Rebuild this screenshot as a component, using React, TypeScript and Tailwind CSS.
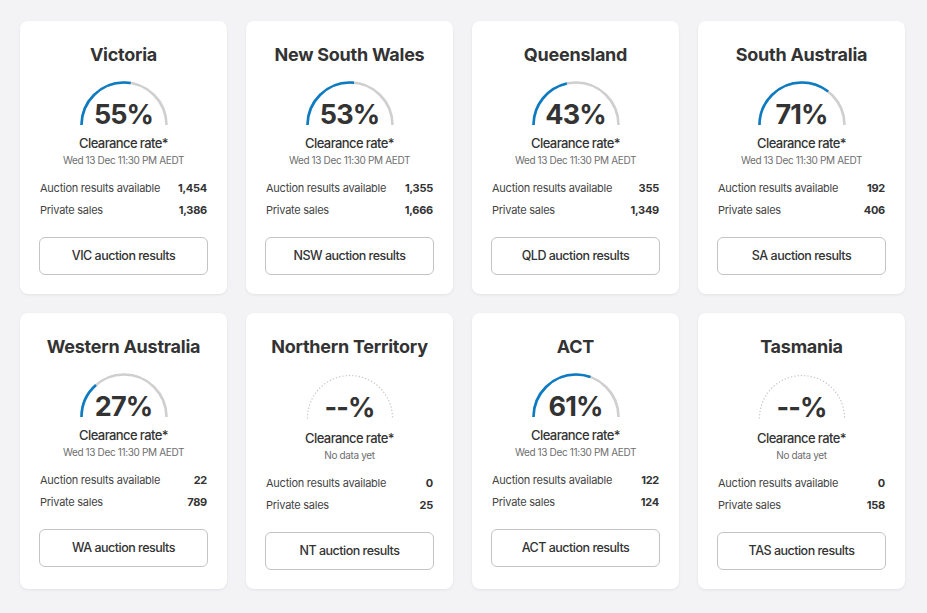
import React from "react";

type Region = {
  name: string;
  code: string;
  rate: number | null;
  auctions: string;
  privateSales: string;
};

const REGIONS: Region[] = [
  { name: "Victoria", code: "VIC", rate: 55, auctions: "1,454", privateSales: "1,386" },
  { name: "New South Wales", code: "NSW", rate: 53, auctions: "1,355", privateSales: "1,666" },
  { name: "Queensland", code: "QLD", rate: 43, auctions: "355", privateSales: "1,349" },
  { name: "South Australia", code: "SA", rate: 71, auctions: "192", privateSales: "406" },
  { name: "Western Australia", code: "WA", rate: 27, auctions: "22", privateSales: "789" },
  { name: "Northern Territory", code: "NT", rate: null, auctions: "0", privateSales: "25" },
  { name: "ACT", code: "ACT", rate: 61, auctions: "122", privateSales: "124" },
  { name: "Tasmania", code: "TAS", rate: null, auctions: "0", privateSales: "158" },
];

const R = 42.5;
const CX = 46;
const CY = 45;
const ARC = `M ${CX - R} ${CY} A ${R} ${R} 0 0 1 ${CX + R} ${CY}`;
const ARC_LEN = Math.PI * R;

function Gauge({ rate }: { rate: number | null }) {
  return (
    <div className="relative mx-auto h-[47px] w-[92px]">
      <svg width="92" height="47" viewBox="0 0 92 47" className="absolute inset-0">
        {rate === null ? (
          <path
            d={ARC}
            fill="none"
            stroke="#c9c9c9"
            strokeWidth="1.4"
            strokeLinecap="round"
            strokeDasharray="0.1 3.2"
          />
        ) : (
          <>
            <path d={ARC} fill="none" stroke="#cfcfcf" strokeWidth="2.6" />
            <path
              d={ARC}
              fill="none"
              stroke="#0b7cc4"
              strokeWidth="2.6"
              strokeDasharray={`${(ARC_LEN * rate) / 100} ${ARC_LEN}`}
            />
          </>
        )}
      </svg>
      <div className="absolute inset-x-0 bottom-[-5px] text-center text-[27px] font-bold leading-[34px] tracking-[-0.9px] text-[#333]">
        {rate === null ? "--%" : `${rate}%`}
      </div>
    </div>
  );
}

function RegionCard({ region }: { region: Region }) {
  const noData = region.rate === null;
  return (
    <div className="flex flex-col rounded-lg bg-white px-[19px] pt-[21px] pb-[19px] shadow-[0_1px_3px_rgba(0,0,0,0.07)]">
      <h2 className="text-center text-[18px] font-bold leading-[26px] tracking-[-0.25px] text-[#333]">
        {region.name}
      </h2>
      <div className={noData ? "mt-[13px]" : "mt-[12px]"}>
        <Gauge rate={region.rate} />
      </div>
      <div
        className={`text-center text-[13px] font-medium leading-[18px] tracking-[-0.6px] text-[#333] ${
          noData ? "mt-[9px]" : "mt-[7px]"
        }`}
      >
        Clearance rate*
      </div>
      <div className="mt-[1px] text-center text-[10px] leading-[14px] tracking-[-0.35px] text-[#6e6e6e]">
        {noData ? "No data yet" : "Wed 13 Dec 11:30 PM AEDT"}
      </div>
      <div className="mt-[12px] flex flex-col gap-[4px] px-[1px] text-[11px] leading-[18px] tracking-[-0.25px]">
        <div className="flex justify-between">
          <span className="text-[#444]">Auction results available</span>
          <span className="font-bold text-[#333]">{region.auctions}</span>
        </div>
        <div className="flex justify-between">
          <span className="text-[#444]">Private sales</span>
          <span className="font-bold text-[#333]">{region.privateSales}</span>
        </div>
      </div>
      <button
        type="button"
        className="mt-[18px] h-[38px] w-full rounded-md border border-[#c4c4c4] bg-white text-[12.5px] font-medium tracking-[-0.5px] text-[#333]"
      >
        {region.code} auction results
      </button>
    </div>
  );
}

export default function App() {
  return (
    <div
      className="min-h-screen bg-[#f3f3f5] pt-[21px] pr-[22px] pb-6 pl-5"
      style={{ fontFamily: "Inter, 'Noto Sans', sans-serif" }}
    >
      <div className="grid grid-cols-4 gap-[19px]">
        {REGIONS.map((r) => (
          <RegionCard key={r.code} region={r} />
        ))}
      </div>
    </div>
  );
}
